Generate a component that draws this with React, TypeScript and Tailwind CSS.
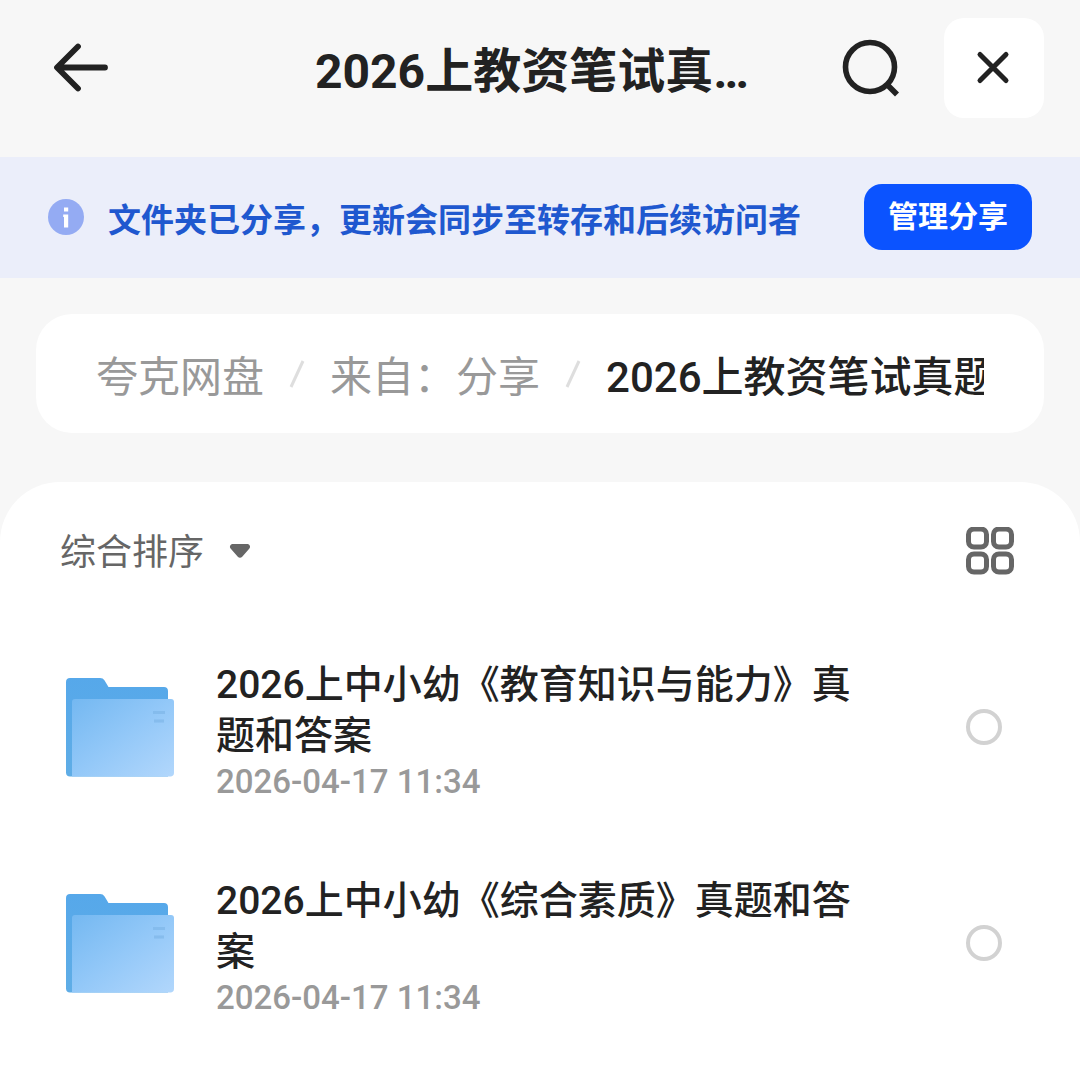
import { useState } from "react";

interface FolderItem {
  id: string;
  name: string;
  updatedAt: string;
}

const folders: FolderItem[] = [
  { id: "knowledge", name: "2026上中小幼《教育知识与能力》真题和答案", updatedAt: "2026-04-17 11:34" },
  { id: "quality", name: "2026上中小幼《综合素质》真题和答案", updatedAt: "2026-04-17 11:34" },
];

const folderTitle = "2026上教资笔试真题和答案";

function BackIcon() {
  return (
    <svg width="60" height="60" viewBox="0 0 60 60" fill="none" stroke="currentColor" strokeWidth="5.8" strokeLinecap="round" strokeLinejoin="round" aria-hidden="true">
      <path d="M27 8.500 6 29.500 27 50.500M6.500 29.500h47.500" />
    </svg>
  );
}

function SearchIcon() {
  return (
    <svg width="60" height="60" viewBox="0 0 60 60" fill="none" stroke="currentColor" strokeWidth="5.6" aria-hidden="true">
      <circle cx="28" cy="29" r="24.500" />
      <path d="m44.500 46 10.500 10.500" />
    </svg>
  );
}

function CloseIcon() {
  return (
    <svg width="36" height="36" viewBox="0 0 36 36" fill="none" stroke="currentColor" strokeWidth="5" strokeLinecap="round" aria-hidden="true">
      <path d="m4 4.500 26 26M30 4.500 4 30.500" />
    </svg>
  );
}

function InfoIcon() {
  return (
    <svg width="36" height="36" viewBox="0 0 36 36" className="shrink-0" aria-hidden="true">
      <circle cx="18" cy="18" r="18" fill="#94abf3" />
      <path fill="#fff" d="M16 8.500h4.200v4H16zM15.200 15.500h5v13H16V18h-.8z" />
    </svg>
  );
}

function GridIcon() {
  return (
    <svg width="48" height="48" viewBox="0 0 48 48" fill="none" stroke="currentColor" strokeWidth="5" aria-hidden="true">
      <rect x="2.500" y="2" width="18" height="18" rx="5.500" />
      <rect x="27.500" y="2" width="18" height="18" rx="5.500" />
      <rect x="2.500" y="27" width="18" height="18" rx="5.500" />
      <rect x="27.500" y="27" width="18" height="18" rx="5.500" />
    </svg>
  );
}

function FolderIcon() {
  return (
    <svg width="108" height="100" viewBox="0 -1 108 100" className="shrink-0" aria-hidden="true">
      <defs>
        <linearGradient id="folder-back" x1="0" y1="0" x2="0" y2="1">
          <stop offset="0" stopColor="#56a8ea" />
          <stop offset="1" stopColor="#5fade6" />
        </linearGradient>
        <linearGradient id="folder-front" x1="0" y1="0" x2="1" y2="1">
          <stop offset="0" stopColor="#74b8f1" />
          <stop offset="0.500" stopColor="#93c8f8" />
          <stop offset="1" stopColor="#b2d7fc" />
        </linearGradient>
      </defs>
      <path fill="url(#folder-back)" d="M4 0h30c2 0 3.500.8 4.600 2.500L42.500 9H98c2.500 0 4 1.500 4 4v85.500H4c-2.500 0-4-1.500-4-4V4c0-2.500 1.500-4 4-4z" />
      <path fill="url(#folder-front)" d="M9 21h96c2 0 3 1 3 3v71c0 2-1.500 3.500-3.500 3.500H6V24c0-2 1-3 3-3z" />
      <path fill="#7fb6e8" opacity=".7" d="M87 33h12v3H87zM88 41.500h10v3H88z" />
    </svg>
  );
}

function PathDivider() {
  return (
    <svg width="66" height="30" viewBox="0 0 66 30" className="shrink-0" fill="none" stroke="#dedede" strokeWidth="3" aria-hidden="true">
      <path d="M39 2 27 28" />
    </svg>
  );
}

function FolderRow({ folder, checked, onToggle }: { folder: FolderItem; checked: boolean; onToggle: () => void }) {
  return (
    <li className="flex h-[216px] items-center pr-[78px] pl-[66px]">
      <FolderIcon />
      <label htmlFor={folder.id} className="ml-[42px] min-w-0 flex-1 pt-2">
        <span className="block text-[39px] leading-[51px] text-[#222]">{folder.name}</span>
        <span className="block text-[33px] leading-10 text-[#999]">{folder.updatedAt}</span>
      </label>
      <input
        id={folder.id}
        type="checkbox"
        checked={checked}
        onChange={onToggle}
        className="ml-[96px] size-9 shrink-0 appearance-none rounded-full border-4 border-[#d2d2d2] checked:bg-[#0b53ff]"
      />
    </li>
  );
}

export default function App() {
  const [selected, setSelected] = useState<string[]>([]);

  const toggle = (id: string) => {
    setSelected((prev) => (prev.includes(id) ? prev.filter((item) => item !== id) : [...prev, id]));
  };

  return (
    <div lang="zh-CN" className="flex min-h-screen flex-col bg-[#f7f7f7] font-['Roboto','Noto_Sans_CJK_SC',sans-serif] font-medium text-[#222]">
      <header className="grid h-[157px] grid-cols-[1fr_minmax(0,450px)_1fr] items-start px-9 pt-[18px]">
        <button type="button" aria-label="返回" className="flex h-[100px] items-center pl-[15px]">
          <BackIcon />
        </button>
        <h1 className="truncate text-5xl leading-[108px] font-bold">{folderTitle}</h1>
        <div className="flex items-center justify-end gap-[42px]">
          <button type="button" aria-label="搜索">
            <SearchIcon />
          </button>
          <button type="button" aria-label="关闭" className="flex size-[100px] items-center justify-center rounded-[20px] bg-white">
            <CloseIcon />
          </button>
        </div>
      </header>

      <section className="flex h-[121px] items-center bg-[#ebeefa] px-12 pb-[2px]">
        <InfoIcon />
        <p className="ml-6 min-w-0 flex-1 truncate pt-2 text-[33px] leading-[48px] font-bold text-[#1f58cf]">
          文件夹已分享，更新会同步至转存和后续访问者
        </p>
        <button type="button" className="h-[66px] shrink-0 rounded-[18px] bg-[#0b53ff] px-6 text-[30px] font-bold text-white">
          管理分享
        </button>
      </section>

      <nav aria-label="路径" className="mx-9 mt-9 rounded-[36px] bg-white px-[60px]">
        <div className="flex h-[119px] items-center overflow-hidden text-[42px] whitespace-nowrap">
          <a href="#root" className="pt-2 font-normal text-[#999]">夸克网盘</a>
          <PathDivider />
          <a href="#share" className="pt-2 font-normal text-[#999]">来自：分享</a>
          <PathDivider />
          <span aria-current="page" className="pt-2">{folderTitle}</span>
        </div>
      </nav>

      <main className="mt-[49px] flex-1 rounded-t-[60px] bg-white">
        <div className="flex h-[137px] items-center justify-between pr-[66px] pl-[60px]">
          <label className="flex items-center gap-6 text-4xl font-normal text-[#666]">
            <select aria-label="排序方式" className="appearance-none bg-transparent pt-1 leading-[48px] outline-none">
              <option>综合排序</option>
            </select>
            <svg width="22" height="16" viewBox="0 0 22 16" fill="currentColor" aria-hidden="true">
              <path d="M4 1h14c2.800 0 4 2.800 2.200 4.800l-7 8c-1.200 1.400-3.200 1.400-4.400 0l-7-8C0 3.800 1.200 1 4 1z" />
            </svg>
          </label>
          <button type="button" aria-label="网格视图" className="text-[#666]">
            <GridIcon />
          </button>
        </div>
        <ul>
          {folders.map((folder) => (
            <FolderRow key={folder.id} folder={folder} checked={selected.includes(folder.id)} onToggle={() => toggle(folder.id)} />
          ))}
        </ul>
      </main>
    </div>
  );
}
